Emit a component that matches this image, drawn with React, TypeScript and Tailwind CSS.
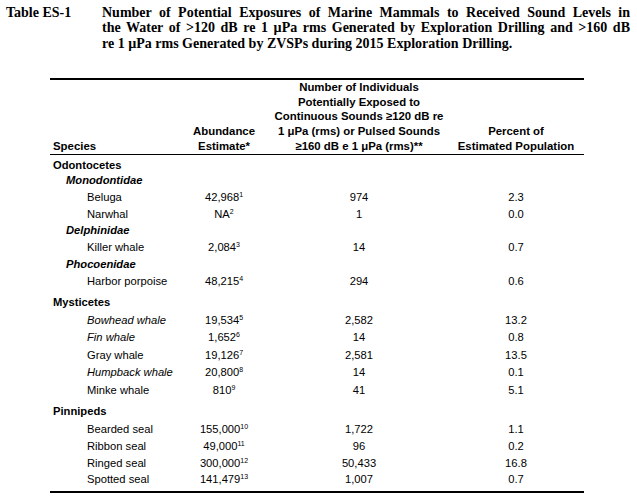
import React from "react";

type Row =
  | { kind: "group"; label: string; h: string }
  | { kind: "family"; label: string; h: string }
  | {
      kind: "species";
      label: string;
      italic?: boolean;
      abundance: string;
      note: string;
      exposed: string;
      percent: string;
      h: string;
    };

const rows: Row[] = [
  { kind: "group", label: "Odontocetes", h: "h-[18px] pt-[3px]" },
  { kind: "family", label: "Monodontidae", h: "h-[15px]" },
  { kind: "species", label: "Beluga", abundance: "42,968", note: "1", exposed: "974", percent: "2.3", h: "h-[18px] pt-[1px]" },
  { kind: "species", label: "Narwhal", abundance: "NA", note: "2", exposed: "1", percent: "0.0", h: "h-[17px]" },
  { kind: "family", label: "Delphinidae", h: "h-[16px]" },
  { kind: "species", label: "Killer whale", abundance: "2,084", note: "3", exposed: "14", percent: "0.7", h: "h-[17px]" },
  { kind: "family", label: "Phocoenidae", h: "h-[17px]" },
  { kind: "species", label: "Harbor porpoise", abundance: "48,215", note: "4", exposed: "294", percent: "0.6", h: "h-[18px]" },
  { kind: "group", label: "Mysticetes", h: "h-[21px] pt-[3px]" },
  { kind: "species", label: "Bowhead whale", italic: true, abundance: "19,534", note: "5", exposed: "2,582", percent: "13.2", h: "h-[17px]" },
  { kind: "species", label: "Fin whale", italic: true, abundance: "1,652", note: "6", exposed: "14", percent: "0.8", h: "h-[18px]" },
  { kind: "species", label: "Gray whale", abundance: "19,126", note: "7", exposed: "2,581", percent: "13.5", h: "h-[17px]" },
  { kind: "species", label: "Humpback whale", italic: true, abundance: "20,800", note: "8", exposed: "14", percent: "0.1", h: "h-[18px]" },
  { kind: "species", label: "Minke whale", abundance: "810", note: "9", exposed: "41", percent: "5.1", h: "h-[17px]" },
  { kind: "group", label: "Pinnipeds", h: "h-[22px] pt-[4px]" },
  { kind: "species", label: "Bearded seal", abundance: "155,000", note: "10", exposed: "1,722", percent: "1.1", h: "h-[17px]" },
  { kind: "species", label: "Ribbon seal", abundance: "49,000", note: "11", exposed: "96", percent: "0.2", h: "h-[17px]" },
  { kind: "species", label: "Ringed seal", abundance: "300,000", note: "12", exposed: "50,433", percent: "16.8", h: "h-[17px]" },
  { kind: "species", label: "Spotted seal", abundance: "141,479", note: "13", exposed: "1,007", percent: "0.7", h: "h-[16px]" },
];

const cols = "grid grid-cols-[128px_92px_178px_136px]";

function Title() {
  return (
    <div className="flex pt-[5px] font-['Liberation_Serif',serif] text-[14px] font-bold leading-[15.3px]">
      <div className="w-[102px] pl-[6px]">Table ES-1</div>
      <div className="w-[528px]">
        <div className="text-justify [text-align-last:justify]">
          Number of Potential Exposures of Marine Mammals to Received Sound Levels in
        </div>
        <div className="text-justify [text-align-last:justify]">
          the Water of &gt;120 dB re 1 µPa rms Generated by Exploration Drilling and &gt;160 dB
        </div>
        <div>re 1 µPa rms Generated by ZVSPs during 2015 Exploration Drilling.</div>
      </div>
    </div>
  );
}

function Header() {
  return (
    <div className={`${cols} border-b border-black text-[11.4px] font-bold leading-[14.8px]`}>
      <div className="flex items-end pl-[3px]">Species</div>
      <div className="flex items-end justify-center text-center">
        <div>
          Abundance
          <br />
          Estimate*
        </div>
      </div>
      <div className="whitespace-nowrap text-center">
        Number of Individuals
        <br />
        Potentially Exposed to
        <br />
        Continuous Sounds ≥120 dB re
        <br />
        1 μPa (rms) or Pulsed Sounds
        <br />
        ≥160 dB e 1 μPa (rms)**
      </div>
      <div className="flex items-end justify-center text-center">
        <div>
          Percent of
          <br />
          Estimated Population
        </div>
      </div>
    </div>
  );
}

function BodyRow({ row }: { row: Row }) {
  if (row.kind === "group") {
    return (
      <div className={`${row.h} flex items-center pl-[3px] font-bold`}>{row.label}</div>
    );
  }
  if (row.kind === "family") {
    return (
      <div className={`${row.h} flex items-center pl-[16px] font-bold italic`}>{row.label}</div>
    );
  }
  return (
    <div className={`${cols} ${row.h} items-center`}>
      <div className={`pl-[37px] whitespace-nowrap ${row.italic ? "italic" : ""}`}>{row.label}</div>
      <div className="text-center whitespace-nowrap">
        {row.abundance}
        <sup className="top-[-4px] text-[7px]">{row.note}</sup>
      </div>
      <div className="text-center">{row.exposed}</div>
      <div className="text-center">{row.percent}</div>
    </div>
  );
}

export default function App() {
  return (
    <div className="h-[500px] w-[637px] overflow-hidden bg-white text-black">
      <Title />
      <div className="ml-[50px] mt-[27px] w-[534px] border-t-2 border-b-2 border-black font-['Liberation_Sans',Arial,sans-serif]">
        <Header />
        <div className="pb-[3px] text-[11.2px] leading-[13px]">
          {rows.map((r) => (
            <BodyRow key={r.label} row={r} />
          ))}
        </div>
      </div>
    </div>
  );
}
